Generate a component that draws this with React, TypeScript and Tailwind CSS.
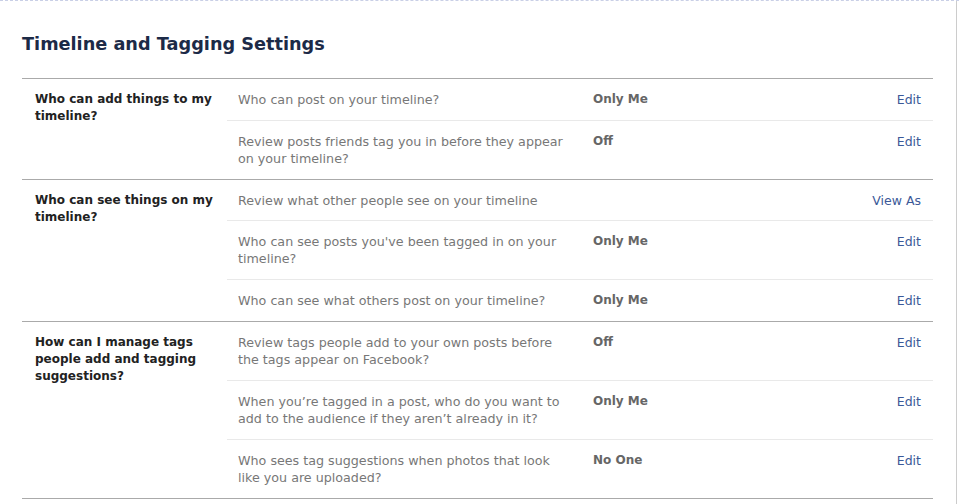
import React from "react";

type Row = { q: React.ReactNode; v?: string; link: string; tight?: boolean };
type Section = { title: React.ReactNode; rows: Row[] };

const sections: Section[] = [
  {
    title: (
      <>
        Who can add things to my
        <br />
        timeline?
      </>
    ),
    rows: [
      { q: "Who can post on your timeline?", v: "Only Me", link: "Edit" },
      {
        q: (
          <>
            Review posts friends tag you in before they appear
            <br />
            on your timeline?
          </>
        ),
        v: "Off",
        link: "Edit",
      },
    ],
  },
  {
    title: (
      <>
        Who can see things on my
        <br />
        timeline?
      </>
    ),
    rows: [
      { q: "Review what other people see on your timeline", link: "View As", tight: true },
      {
        q: (
          <>
            Who can see posts you've been tagged in on your
            <br />
            timeline?
          </>
        ),
        v: "Only Me",
        link: "Edit",
      },
      { q: "Who can see what others post on your timeline?", v: "Only Me", link: "Edit" },
    ],
  },
  {
    title: (
      <>
        How can I manage tags
        <br />
        people add and tagging
        <br />
        suggestions?
      </>
    ),
    rows: [
      {
        q: (
          <>
            Review tags people add to your own posts before
            <br />
            the tags appear on Facebook?
          </>
        ),
        v: "Off",
        link: "Edit",
      },
      {
        q: (
          <>
            When you’re tagged in a post, who do you want to
            <br />
            add to the audience if they aren’t already in it?
          </>
        ),
        v: "Only Me",
        link: "Edit",
      },
      {
        q: (
          <>
            Who sees tag suggestions when photos that look
            <br />
            like you are uploaded?
          </>
        ),
        v: "No One",
        link: "Edit",
      },
    ],
  },
];

export default function App() {
  return (
    <div
      className="w-[959px] h-[504px] bg-white border-t border-dashed border-[#c9cfe6] overflow-hidden"
      style={{ fontFamily: '"DejaVu Sans", "Liberation Sans", sans-serif' }}
    >
      <div className="w-[957px] h-full border-r border-[#cccccc]">
        <div className="pl-[22px] w-[933px]">
          <h1 className="pt-[32px] mb-[23px] leading-[22px] text-[17.7px] font-bold text-[#1c2a47]">
            Timeline and Tagging Settings
          </h1>
          <div className="border-b border-[#aaaaaa]">
            {sections.map((s, i) => (
              <div key={i} className="grid grid-cols-[205px_1fr] border-t border-[#aaaaaa]">
                <div className="pl-[13px] pt-[12px] leading-[17px] text-[12px] font-bold text-[#222222]">
                  {s.title}
                </div>
                <div>
                  {s.rows.map((r, j) => (
                    <div
                      key={j}
                      className={
                        "flex items-start pl-[11px] pr-[12px] pt-[12px] leading-[17px] text-[12px] " +
                        (r.tight ? "pb-[11px] " : "pb-[12px] ") +
                        (j > 0 ? "border-t border-[#e9e9e9]" : "")
                      }
                    >
                      <div className="w-[355px] shrink-0 text-[12.7px] text-[#777777] whitespace-nowrap">
                        {r.q}
                      </div>
                      <div className="flex-1 text-[12px] font-bold text-[#666666]">{r.v}</div>
                      <a className="text-[12.5px] text-[#3b5998] cursor-pointer">{r.link}</a>
                    </div>
                  ))}
                </div>
              </div>
            ))}
          </div>
        </div>
      </div>
    </div>
  );
}
